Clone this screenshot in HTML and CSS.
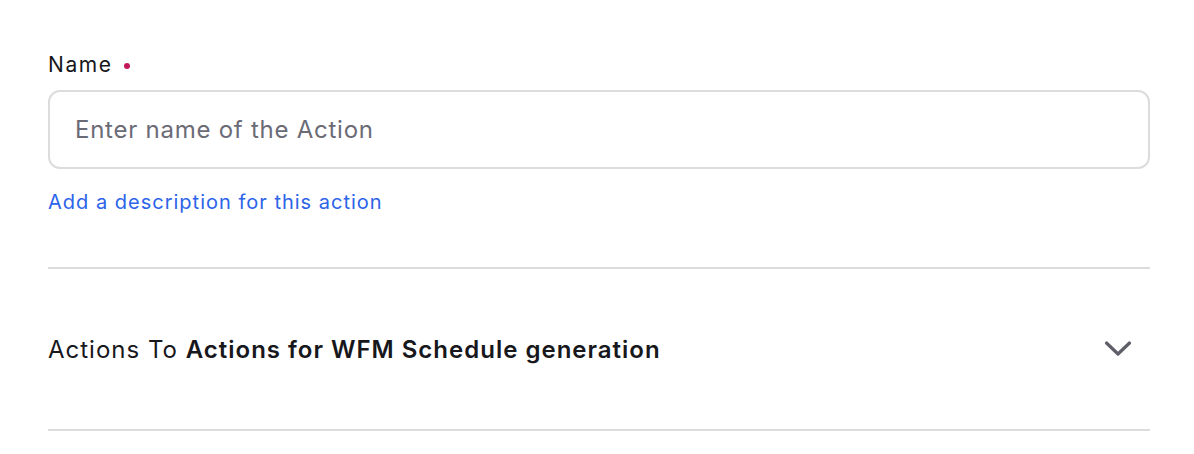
FILE: index.html
```html
<!DOCTYPE html>
<html lang="en">
<head>
    <meta charset="UTF-8">
    <title>Action</title>
    <link rel="stylesheet" href="styles.css">
</head>
<body>
    <div class="container">
        <div class="field">
            <label for="name" class="label">Name <span class="required"></span></label>
            <input type="text" id="name" class="input" placeholder="Enter name of the Action">
            <a href="#" class="add-link">Add a description for this action</a>
        </div>

        <div class="accordion">
            <div class="accordion-title">Actions To <strong>Actions for WFM Schedule generation</strong></div>
            <svg class="chevron" width="28" height="18" viewBox="0 0 28 18">
                <path d="M2.5 3 L14 14 L25.5 3" fill="none" stroke="#5f5f6a" stroke-width="3.2" stroke-linecap="round" stroke-linejoin="round"/>
            </svg>
        </div>
    </div>
</body>
</html>
```

FILE: styles.css
```css
/* Base */
body {
    margin: 0;
    background: #fff;
    font-family: 'Inter', 'Noto Sans', sans-serif;
    color: #17171c;
}

.container {
    width: 1102px;
    padding: 52px 0 0 48px;
}

/* Name field */
.field {
    display: flex;
    flex-direction: column;
    padding-bottom: 52px;
    border-bottom: 2px solid #dcdcdc;
}

.label {
    font-size: 21px;
    line-height: 26px;
    letter-spacing: 1.6px;
    margin-bottom: 12px;
}

.required {
    display: inline-block;
    width: 6px;
    height: 6px;
    margin-left: 4px;
    border-radius: 50%;
    background: #c2185b;
    vertical-align: middle;
}

.input {
    box-sizing: border-box;
    height: 79px;
    padding: 0 25px;
    border: 2px solid #dcdcdc;
    border-radius: 12px;
    font-family: inherit;
    font-size: 24px;
    letter-spacing: 0.75px;
    color: #17171c;
    outline: none;
}

.input::placeholder {
    color: #6b6b76;
}

.add-link {
    margin-top: 20px;
    font-size: 20px;
    line-height: 26px;
    letter-spacing: 1px;
    color: #2c63e8;
    text-decoration: none;
}

/* Accordion row */
.accordion {
    display: flex;
    align-items: center;
    justify-content: space-between;
    height: 160px;
    border-bottom: 2px solid #dcdcdc;
    font-size: 24px;
    letter-spacing: 1px;
}

.accordion-title strong {
    font-weight: 600;
}

.chevron {
    margin-right: 18px;
}
```
